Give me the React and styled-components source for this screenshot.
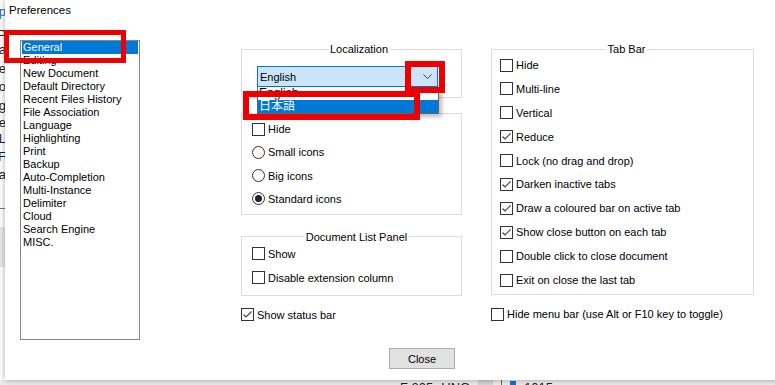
import React from "react";
import styled, { createGlobalStyle } from "styled-components";

const GlobalStyle = createGlobalStyle`
  html, body {
    margin: 0;
    padding: 0;
    overflow: hidden;
    background: #f0f0f0;
  }
  body {
    font-family: "Liberation Sans", Arial, sans-serif;
    font-size: 11px;
    color: #000;
  }
`;

const pages = [
  "General", "Editing", "New Document", "Default Directory", "Recent Files History",
  "File Association", "Language", "Highlighting", "Print", "Backup",
  "Auto-Completion", "Multi-Instance", "Delimiter", "Cloud", "Search Engine", "MISC.",
];

const tabBarOptions = [
  ["Hide", false],
  ["Multi-line", false],
  ["Vertical", false],
  ["Reduce", true],
  ["Lock (no drag and drop)", false],
  ["Darken inactive tabs", true],
  ["Draw a coloured bar on active tab", true],
  ["Show close button on each tab", true],
  ["Double click to close document", false],
  ["Exit on close the last tab", false],
];

const peekLines = [
  ["Help", 12, "#1a5fb4"], ["UP", 35], ["Pla", 50], ["Line", 69], ["Go", 87],
  ["Log", 106], ["Re", 123], ["FIL", 139], ["IF", 157], ["Fina", 175],
];

export default function App() {
  return (
    <Desktop>
      <GlobalStyle />
      <LeftPeek>
        {peekLines.map(([t, y, c]) => (
          <PeekLine key={t} $y={y} $color={c}>{t}</PeekLine>
        ))}
        <PeekRule />
        <PeekBlock />
      </LeftPeek>
      <BottomStrip>
        <StripText>F 205</StripText>
        <StripText>UNG</StripText>
        <StripBlock />
        <StripDivider />
        <StripIcon />
        <StripText>1015.png</StripText>
      </BottomStrip>

      <Dialog>
        <TitleBar>Preferences</TitleBar>
        <Body>
          <PageList>
            {pages.map((p, i) => (
              <PageItem key={p} $selected={i === 0}>{p}</PageItem>
            ))}
          </PageList>

          <MiddleCol>
            <Group $pad="11px 0 10px 15px">
              <legend>Localization</legend>
              <ComboWrap>
                <Combo>
                  <span>English</span>
                  <ComboArrow>
                    <svg width="9" height="5" viewBox="0 0 9 5">
                      <path d="M0.5 0.5 L4.5 4.5 L8.5 0.5" fill="none" stroke="#444" strokeWidth="1" />
                    </svg>
                  </ComboArrow>
                </Combo>
                <DropList>
                  <DropItem>English</DropItem>
                  <DropItem $selected>日本語</DropItem>
                </DropList>
              </ComboWrap>
            </Group>

            <Group $mt={9} $pad="2px 0 7px 10px" $gap={7.3}>
              <legend>Toolbar</legend>
              <Check label="Hide" />
              <Radio label="Small icons" />
              <Radio label="Big icons" />
              <Radio label="Standard icons" checked />
            </Group>

            <Group $mt={16} $pad="3px 0 9px 10px" $gap={8}>
              <legend>Document List Panel</legend>
              <Check label="Show" />
              <Check label="Disable extension column" />
            </Group>

            <Loose>
              <Check label="Show status bar" checked />
            </Loose>
          </MiddleCol>

          <RightCol>
            <Group $pad="2px 0 6px 8px" $gap={7.9}>
              <legend>Tab Bar</legend>
              {tabBarOptions.map(([label, on]) => (
                <Check key={label} label={label} checked={on} />
              ))}
            </Group>
            <Loose>
              <Check label="Hide menu bar (use Alt or F10 key to toggle)" />
            </Loose>
          </RightCol>
        </Body>
        <Footer>
          <Button>Close</Button>
        </Footer>
      </Dialog>

      <Marker $x={4} $y={30} $w={122} $h={33} $t={5} />
      <Marker $x={405} $y={61} $w={40} $h={32} $t={6} />
      <Marker $x={243} $y={91} $w={177} $h={29} $t={6} />
    </Desktop>
  );
}

function Check({ label, checked }) {
  return (
    <Row>
      <Box>
        {checked && (
          <svg width="11" height="11" viewBox="0 0 11 11">
            <path d="M1.5 5.5 L4 8 L9.5 2.5" fill="none" stroke="#444" strokeWidth="1.1" />
          </svg>
        )}
      </Box>
      <span>{label}</span>
    </Row>
  );
}

function Radio({ label, checked }) {
  return (
    <Row>
      <Circle>{checked && <Dot />}</Circle>
      <span>{label}</span>
    </Row>
  );
}

const Desktop = styled.div`
  position: relative;
  width: 775px;
  height: 385px;
  overflow: hidden;
  background: #fff;
`;

const LeftPeek = styled.div`
  position: absolute;
  left: 0;
  top: 0;
  width: 6px;
  height: 100%;
  overflow: hidden;
  background: #fff;
  border-right: 1px solid #e6e6e6;
`;

const PeekLine = styled.div`
  position: absolute;
  right: 0;
  top: ${(p) => p.$y - 7}px;
  white-space: nowrap;
  font-size: 13px;
  line-height: 14px;
  color: ${(p) => p.$color || "#222"};
`;

const PeekRule = styled.div`
  position: absolute;
  left: 0;
  right: 0;
  top: 208px;
  border-top: 1px solid #777;
`;

const PeekBlock = styled.div`
  position: absolute;
  left: 0;
  right: 0;
  top: 227px;
  height: 40px;
  background: #e8e8e8;
`;

const BottomStrip = styled.div`
  position: absolute;
  left: 0;
  right: 0;
  top: 380px;
  height: 5px;
  background: #ececec;
  display: flex;
  align-items: flex-start;
  gap: 8px;
  padding-left: 400px;
  overflow: hidden;
`;

const StripText = styled.span`
  font-size: 13px;
  line-height: 13px;
  margin-top: 1px;
  color: #222;
  white-space: nowrap;
`;

const StripBlock = styled.span`
  width: 15px;
  height: 5px;
  background: #d4d4d4;
`;

const StripDivider = styled.span`
  width: 1px;
  height: 5px;
  background: #666;
`;

const StripIcon = styled.span`
  width: 6px;
  height: 5px;
  margin-top: 1px;
  background: #1e6fc8;
`;

const Dialog = styled.div`
  position: absolute;
  left: 5px;
  top: 0;
  width: 800px;
  height: 380px;
  background: #fff;
  box-shadow: 0 0 6px rgba(0, 0, 0, 0.35);
  display: flex;
  flex-direction: column;
`;

const TitleBar = styled.div`
  height: 30px;
  padding-left: 4px;
  line-height: 20px;
  font-size: 11.5px;
`;

const Body = styled.div`
  display: flex;
  align-items: flex-start;
`;

const PageList = styled.div`
  margin: 10px 0 0 15px;
  width: 116px;
  height: 298px;
  border: 1px solid #828790;
  padding: 0 1px;
  box-sizing: content-box;
`;

const PageItem = styled.div`
  height: 13px;
  line-height: 13px;
  padding-left: 1px;
  white-space: nowrap;
  background: ${(p) => (p.$selected ? "#0078d7" : "transparent")};
  color: ${(p) => (p.$selected ? "#fff" : "#000")};
`;

const MiddleCol = styled.div`
  margin: 13px 0 0 101px;
  width: 221px;
  display: flex;
  flex-direction: column;
`;

const RightCol = styled.div`
  margin: 13px 0 0 29px;
  width: 263px;
  display: flex;
  flex-direction: column;
`;

const Group = styled.fieldset`
  margin: ${(p) => p.$mt || 0}px 0 0 0;
  padding: ${(p) => p.$pad};
  border: 1px solid #dcdcdc;
  min-width: 0;
  display: flex;
  flex-direction: column;
  gap: ${(p) => p.$gap || 0}px;

  legend {
    margin: 0 auto;
    padding: 0 2px;
    font-size: 11px;
    line-height: 12px;
    background: #fff;
  }
`;

const Loose = styled.div`
  margin-top: 11px;
`;

const Row = styled.div`
  display: flex;
  align-items: center;
  gap: 3px;
  height: 16px;
  white-space: nowrap;
`;

const Box = styled.span`
  width: 13px;
  height: 13px;
  box-sizing: border-box;
  border: 1px solid #333;
  background: #fff;
  display: flex;
  align-items: center;
  justify-content: center;
  flex: none;
`;

const Circle = styled.span`
  width: 13px;
  height: 13px;
  box-sizing: border-box;
  border: 1px solid #333;
  border-radius: 50%;
  background: #fff;
  display: flex;
  align-items: center;
  justify-content: center;
  flex: none;
`;

const Dot = styled.span`
  width: 7px;
  height: 7px;
  border-radius: 50%;
  background: #222;
`;

const ComboWrap = styled.div`
  position: relative;
  width: 181px;
`;

const Combo = styled.div`
  height: 21px;
  box-sizing: border-box;
  border: 1px solid #0078d7;
  background: #cce4f7;
  display: flex;
  align-items: center;
  padding-left: 2px;

  span:first-child {
    flex: 1;
  }
`;

const ComboArrow = styled.span`
  width: 17px;
  height: 100%;
  display: flex;
  align-items: center;
  justify-content: center;
  margin-right: 1px;
`;

const DropList = styled.div`
  position: absolute;
  left: 0;
  top: 21px;
  width: 180px;
  border: 1px solid #646464;
  border-top: none;
  background: #fff;
  box-shadow: 3px 3px 4px rgba(0, 0, 0, 0.25);
  z-index: 2;
`;

const DropItem = styled.div`
  height: 13px;
  line-height: 13px;
  padding-left: 1px;
  font-family: "Liberation Sans", "Noto Sans CJK JP", sans-serif;
  font-size: 12px;
  background: ${(p) => (p.$selected ? "#0078d7" : "#fff")};
  color: ${(p) => (p.$selected ? "#fff" : "#000")};
`;

const Footer = styled.div`
  margin-top: 8px;
  padding-left: 384px;
`;

const Button = styled.button`
  width: 66px;
  height: 21px;
  padding: 0;
  border: 1px solid #adadad;
  background: #e1e1e1;
  font-family: "Liberation Sans", Arial, sans-serif;
  font-size: 11px;
  color: #000;
`;

const Marker = styled.div`
  position: absolute;
  left: ${(p) => p.$x}px;
  top: ${(p) => p.$y}px;
  width: ${(p) => p.$w}px;
  height: ${(p) => p.$h}px;
  box-sizing: border-box;
  border: ${(p) => p.$t}px solid #ee0000;
  z-index: 5;
  pointer-events: none;
`;
